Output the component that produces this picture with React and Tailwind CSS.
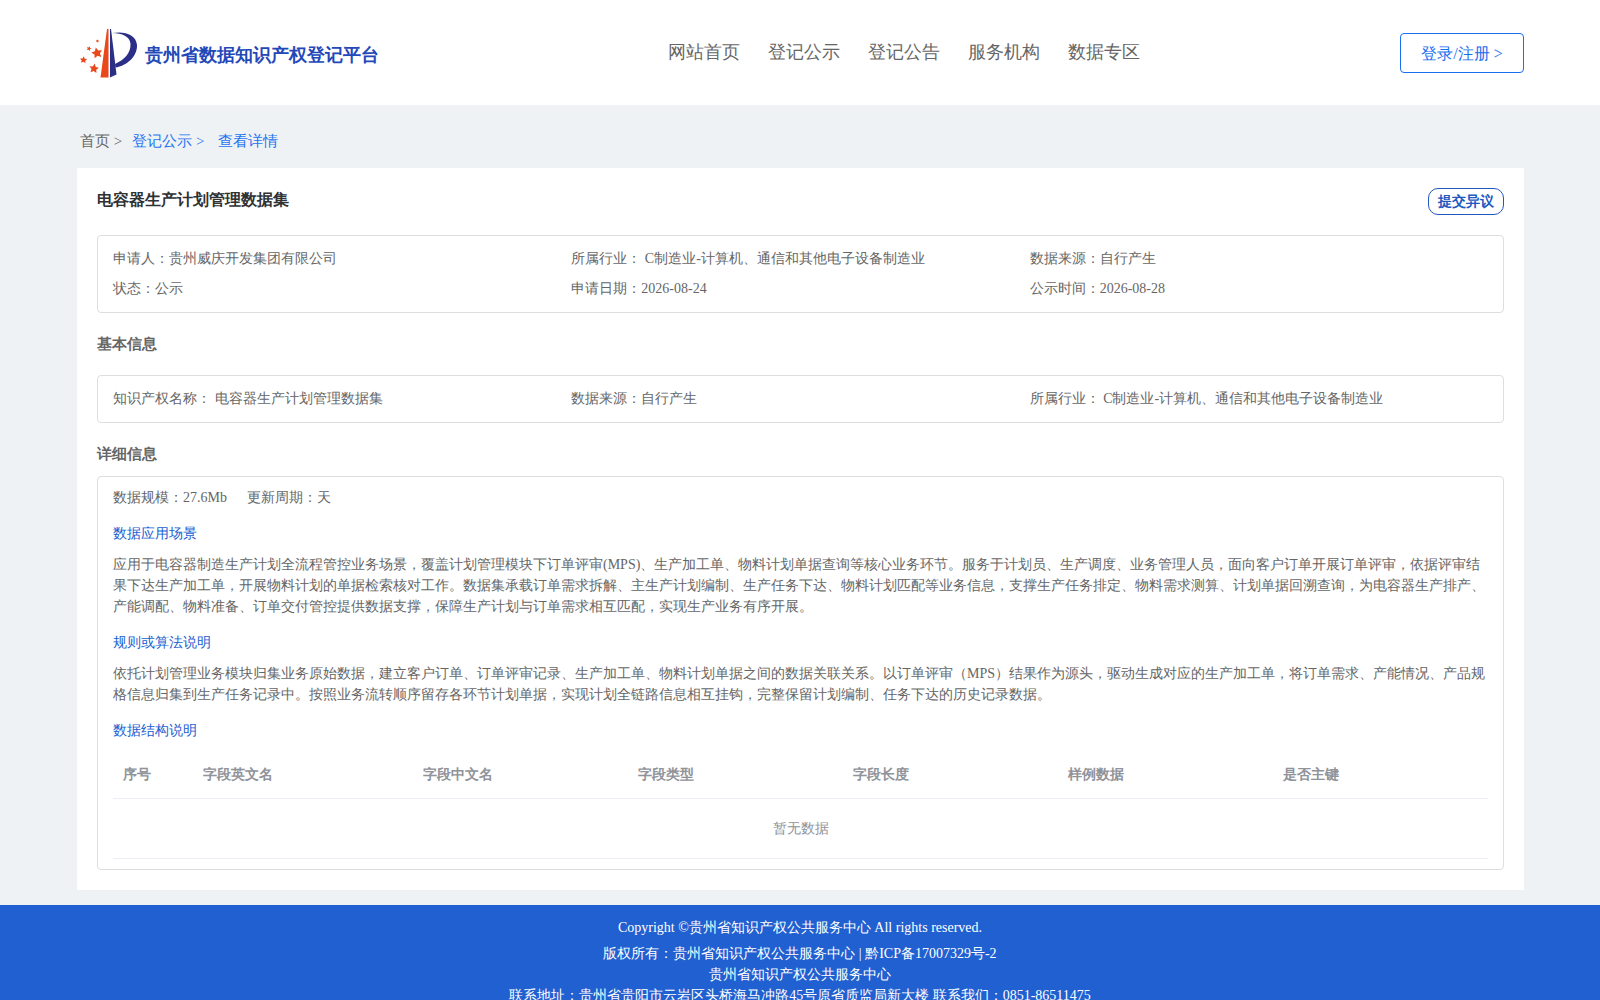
const NAV = ['网站首页', '登记公示', '登记公告', '服务机构', '数据专区'];

const SUMMARY = [
  ['申请人：', '贵州威庆开发集团有限公司'],
  ['所属行业：', ' C制造业-计算机、通信和其他电子设备制造业'],
  ['数据来源：', '自行产生'],
  ['状态：', '公示'],
  ['申请日期：', '2026-08-24'],
  ['公示时间：', '2026-08-28'],
];

const BASIC = [
  ['知识产权名称：', ' 电容器生产计划管理数据集'],
  ['数据来源：', '自行产生'],
  ['所属行业：', ' C制造业-计算机、通信和其他电子设备制造业'],
];

const COLUMNS = ['序号', '字段英文名', '字段中文名', '字段类型', '字段长度', '样例数据', '是否主键'];

function Logo() {
  const star = 'M0 -5 L1.5 -1.800 L4.8 -1.5 L2.4 0.800 L3 4.1 L0 2.5 L-3 4.1 L-2.4 0.800 L-4.8 -1.5 L-1.5 -1.800 Z';
  return (
    <svg width="60" height="50" viewBox="0 0 60 50" aria-hidden="true">
      <g fill="#e8481a">
        <path d="M28 1 H29.5 V49.5 H21.5 Z" />
        <path d={star} transform="translate(18 25) rotate(-12) scale(1.15)" />
        <path d={star} transform="translate(15 40.5) rotate(8)" />
        <path d={star} transform="translate(4.5 32) rotate(5) scale(.75)" />
        <path d={star} transform="translate(10 20.5) rotate(20) scale(.5)" />
        <path d={star} transform="translate(18.5 13) rotate(15) scale(.35)" />
      </g>
      <g fill="#2b2f86">
        <path d="M31 1 H32 L37.5 46.5 L31 49.5 Z" />
        <path d="M33.500 5 C45 3 57 6 58 17 C58.500 29 47 38 36.500 39.500 L36 36 C45 32 52 25 51.500 16 C51 8 43 5.500 33.500 5 Z" />
      </g>
    </svg>
  );
}

function InfoBox({ items }) {
  return (
    <dl className="grid grid-cols-3 rounded border border-[#dcdfe0] px-[15px] pt-[7px] pb-[9px]">
      {items.map(([label, value]) => (
        <div key={label} className="flex h-[30px] items-center whitespace-pre">
          <dt>{label}</dt>
          <dd>{value}</dd>
        </div>
      ))}
    </dl>
  );
}

function SubHeading({ children }) {
  return <h3 className="mt-[15px] mb-[10px] text-[#2160d0]">{children}</h3>;
}

export default function App() {
  return (
    <div className="min-h-screen bg-[#eef2f5] font-['Liberation_Serif',serif] text-[14px] leading-[21px] text-[#666]">
      <header className="flex h-[105px] items-center bg-white pr-[76px] pl-[79px]">
        <div className="flex flex-1">
          <a href="#" className="flex items-center gap-[6px] text-[18px] font-bold text-[#2348b8]">
            <Logo />
            <span className="pt-[6px]">贵州省数据知识产权登记平台</span>
          </a>
        </div>
        <nav className="flex gap-7 pl-[205px] text-[18px]">
          {NAV.map((item) => (
            <a key={item} href="#">{item}</a>
          ))}
        </nav>
        <div className="flex flex-1 justify-end">
          <button type="button" className="h-10 w-[124px] rounded border border-[#1a6ef0] pt-[2px] text-[16px] text-[#1a6ef0]">
            登录/注册 &gt;
          </button>
        </div>
      </header>

      <nav aria-label="breadcrumb" className="flex h-[63px] items-center pt-[10px] pl-20 text-[15px] text-[#1f74f0]">
        <a href="#" className="mr-[10px] text-[#666]">首页 &gt;</a>
        <a href="#" className="mr-[14px]">登记公示 &gt;</a>
        <a href="#">查看详情</a>
      </nav>

      <main className="mr-[76px] ml-[77px] bg-white p-5">
        <div className="flex h-[47px] items-start justify-between">
          <h1 className="pt-[1px] text-[16px] font-bold text-[#303133]">电容器生产计划管理数据集</h1>
          <button type="button" className="h-[27px] w-[76px] rounded-[10px] border border-[#2058c0] font-bold text-[#2058c0]">
            提交异议
          </button>
        </div>
        <InfoBox items={SUMMARY} />
        <h2 className="flex h-[62px] items-center text-[15px] font-bold">基本信息</h2>
        <InfoBox items={BASIC} />
        <h2 className="flex h-[53px] items-center pt-[9px] text-[15px] font-bold">详细信息</h2>
        <section className="rounded border border-[#dcdfe0] px-[15px] py-[10px]">
          <p className="flex gap-5">
            <span>数据规模：27.6Mb</span>
            <span>更新周期：天</span>
          </p>
          <SubHeading>数据应用场景</SubHeading>
          <p>
            应用于电容器制造生产计划全流程管控业务场景，覆盖计划管理模块下订单评审(MPS)、生产加工单、物料计划单据查询等核心业务环节。服务于计划员、生产调度、业务管理人员，面向客户订单开展订单评审，依据评审结果下达生产加工单，开展物料计划的单据检索核对工作。数据集承载订单需求拆解、主生产计划编制、生产任务下达、物料计划匹配等业务信息，支撑生产任务排定、物料需求测算、计划单据回溯查询，为电容器生产排产、产能调配、物料准备、订单交付管控提供数据支撑，保障生产计划与订单需求相互匹配，实现生产业务有序开展。
          </p>
          <SubHeading>规则或算法说明</SubHeading>
          <p>
            依托计划管理业务模块归集业务原始数据，建立客户订单、订单评审记录、生产加工单、物料计划单据之间的数据关联关系。以订单评审（MPS）结果作为源头，驱动生成对应的生产加工单，将订单需求、产能情况、产品规格信息归集到生产任务记录中。按照业务流转顺序留存各环节计划单据，实现计划全链路信息相互挂钩，完整保留计划编制、任务下达的历史记录数据。
          </p>
          <SubHeading>数据结构说明</SubHeading>
          <table className="w-full table-fixed text-[#909399]">
            <colgroup>
              <col className="w-[80px]" />
              <col className="w-[220px]" />
              <col span={5} />
            </colgroup>
            <thead>
              <tr className="h-[47px] border-b border-[#ebeef5]">
                {COLUMNS.map((c) => (
                  <th key={c} scope="col" className="px-[10px] text-left font-bold">{c}</th>
                ))}
              </tr>
            </thead>
            <tbody>
              <tr className="h-[60px] border-b border-[#ebeef5]">
                <td colSpan={7} className="text-center">暂无数据</td>
              </tr>
            </tbody>
          </table>
        </section>
      </main>

      <footer className="mt-[15px] bg-[#2160d0] pt-3 text-center text-white">
        <p className="mb-[5px]">Copyright ©贵州省知识产权公共服务中心 All rights reserved.</p>
        <p>版权所有：贵州省知识产权公共服务中心 | 黔ICP备17007329号-2</p>
        <p>贵州省知识产权公共服务中心</p>
        <p>联系地址：贵州省贵阳市云岩区头桥海马冲路45号原省质监局新大楼 联系我们：0851-86511475</p>
      </footer>
    </div>
  );
}
